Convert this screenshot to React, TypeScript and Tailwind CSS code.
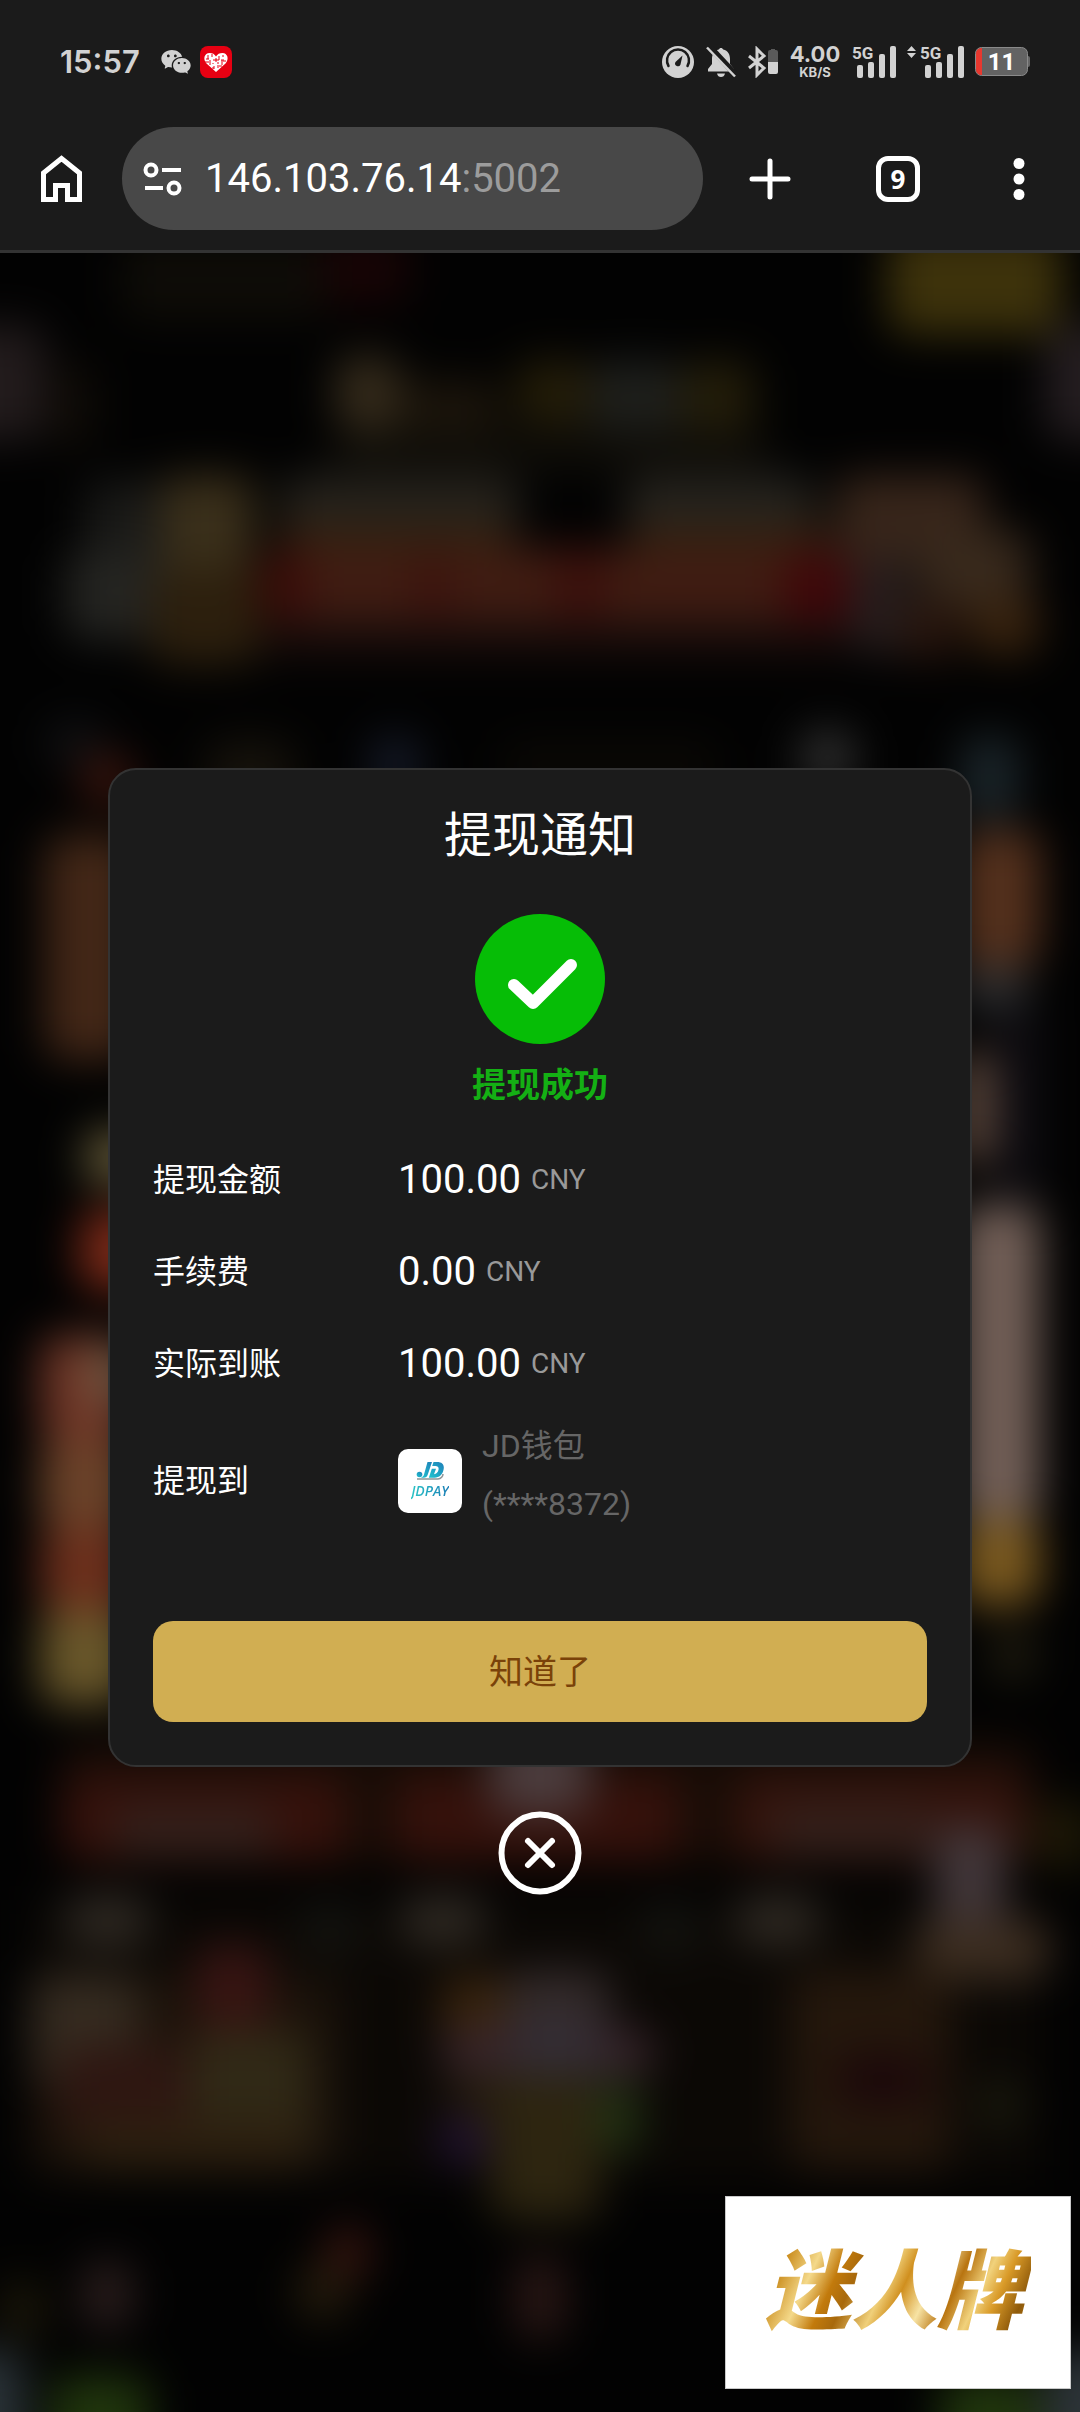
import { RiWechatFill } from "react-icons/ri";

type Patch = [x: number, y: number, w: number, h: number, color: string];

// lobby page behind the dialog, only seen as dim patches of colour
const LOBBY_PATCHES: Patch[] = [
  // top bar
  [120, 240, 210, 80, "#0e0c07"],
  [320, 230, 90, 75, "#170405"],
  [888, 230, 174, 104, "#3d320b"],
  [-60, 325, 105, 115, "#221b1c"],
  [50, 360, 45, 90, "#100c07"],
  [1045, 325, 100, 115, "#241d20"],
  // slogan
  [335, 355, 65, 75, "#352b1b"],
  [400, 380, 100, 60, "#1c150b"],
  [515, 360, 75, 65, "#241d08"],
  [590, 360, 90, 75, "#1e1f1c"],
  [680, 360, 75, 75, "#231d09"],
  [330, 430, 440, 40, "#0f0d08"],
  // banner
  [85, 480, 80, 90, "#191917"],
  [65, 550, 100, 90, "#242421"],
  [160, 475, 95, 100, "#3a2f1a"],
  [150, 570, 110, 95, "#2c1f0d"],
  [280, 475, 240, 60, "#25221c"],
  [625, 475, 190, 60, "#25231e"],
  [280, 525, 235, 30, "#35220f"],
  [630, 525, 200, 30, "#35220f"],
  [265, 548, 590, 75, "#401c12"],
  [260, 550, 45, 70, "#3a0a08"],
  [415, 550, 35, 70, "#3c120d"],
  [555, 550, 50, 70, "#3c0f0b"],
  [785, 550, 65, 75, "#400609"],
  [260, 620, 590, 35, "#1a0d0b"],
  [835, 475, 150, 90, "#37251a"],
  [850, 560, 60, 95, "#261d1d"],
  [920, 530, 110, 80, "#38291c"],
  [970, 600, 70, 55, "#39230e"],
  [900, 600, 60, 60, "#28150d"],
  // category icons
  [45, 720, 60, 45, "#101113"],
  [80, 755, 55, 50, "#3a140c"],
  [205, 740, 90, 65, "#16120b"],
  [370, 735, 50, 60, "#151a28"],
  [500, 740, 220, 50, "#0a0805"],
  [800, 730, 55, 55, "#2f2f2f"],
  [960, 735, 60, 85, "#1a2429"],
  // left column
  [45, 835, 90, 225, "#432717"],
  [85, 1130, 60, 55, "#655a38"],
  [80, 1210, 70, 80, "#7d2a18"],
  [40, 1335, 90, 105, "#6f3526"],
  [85, 1345, 50, 60, "#6e5540"],
  [40, 1440, 90, 90, "#6b4229"],
  [40, 1530, 90, 80, "#6c2f1c"],
  [40, 1610, 90, 95, "#69572a"],
  // right column
  [960, 830, 80, 135, "#55311d"],
  [960, 965, 70, 45, "#2d2e30"],
  [960, 1050, 30, 115, "#74594a"],
  [995, 1010, 45, 190, "#100e13"],
  [960, 1205, 80, 315, "#725f57"],
  [960, 1520, 80, 85, "#7a591f"],
  [990, 1630, 45, 50, "#221e10"],
  // game rows
  [60, 1740, 975, 125, "#180c06"],
  [62, 1775, 285, 85, "#35110b"],
  [110, 1805, 165, 50, "#33201b"],
  [395, 1775, 285, 85, "#35110b"],
  [735, 1775, 290, 85, "#34130c"],
  [770, 1805, 165, 50, "#33201b"],
  [490, 1730, 100, 85, "#4b3c3d"],
  [65, 1895, 85, 50, "#302a23"],
  [400, 1895, 85, 50, "#302a23"],
  [735, 1895, 85, 50, "#302a23"],
  [300, 1900, 60, 55, "#13130f"],
  [640, 1900, 60, 55, "#13130f"],
  [1035, 1800, 60, 70, "#1d1806"],
  [935, 1825, 70, 105, "#42373a"],
  [915, 1920, 135, 60, "#3c2d20"],
  // game covers
  [30, 1975, 310, 195, "#1b120a"],
  [30, 1975, 110, 110, "#352b20"],
  [195, 1945, 75, 85, "#371412"],
  [60, 2045, 140, 85, "#2e1611"],
  [190, 2030, 120, 135, "#302916"],
  [80, 2120, 220, 50, "#2c1f0f"],
  [440, 1975, 70, 65, "#38230d"],
  [505, 1970, 105, 90, "#332a2a"],
  [440, 2030, 215, 45, "#37242b"],
  [510, 2020, 90, 65, "#342d35"],
  [445, 2075, 150, 50, "#201809"],
  [490, 2080, 110, 140, "#2d2510"],
  [598, 2080, 42, 75, "#213213"],
  [440, 2115, 45, 50, "#211136"],
  [790, 1970, 160, 200, "#24170c"],
  [835, 2055, 95, 50, "#1b070a"],
  [980, 2080, 40, 50, "#1c1c0e"],
  // footer tabs
  [82, 2260, 50, 70, "#2b1e1d"],
  [325, 2225, 45, 55, "#37140f"],
  [297, 2265, 50, 55, "#251c0c"],
  [515, 2255, 50, 85, "#2a1715"],
  [0, 2280, 45, 60, "#1c1809"],
  [-60, 2350, 85, 130, "#2a3338"],
  [50, 2375, 100, 110, "#20350d"],
  [940, 2375, 100, 110, "#20350d"],
  [1045, 2350, 100, 130, "#2c3338"],
];

const AMOUNTS = [
  { label: "提现金额", value: "100.00" },
  { label: "手续费", value: "0.00" },
  { label: "实际到账", value: "100.00" },
];

const LobbyBackdrop = () => (
  <svg
    className="absolute inset-0 w-full h-full"
    viewBox="0 253 1080 2159"
    preserveAspectRatio="xMidYMin slice"
    aria-hidden="true"
  >
    <defs>
      <filter id="lobby-blur" x="-10%" y="-10%" width="120%" height="120%" colorInterpolationFilters="sRGB">
        <feGaussianBlur stdDeviation="22" />
      </filter>
    </defs>
    <g filter="url(#lobby-blur)">
      <rect x="-100" y="100" width="1280" height="2500" fill="#020202" />
      <rect x="30" y="1900" width="1010" height="280" fill="#0b0805" />
      {LOBBY_PATCHES.map(([x, y, w, h, color]) => (
        <rect key={`${x}-${y}-${w}`} x={x} y={y} width={w} height={h} rx="20" fill={color} />
      ))}
    </g>
  </svg>
);

const SignalBars = () => (
  <div className="relative w-11 h-8">
    <span className="absolute top-0 left-0 text-[17px] leading-[14px] font-bold font-['Roboto',sans-serif]">5G</span>
    <svg className="w-11 h-8" viewBox="0 0 44 32" fill="currentColor" aria-hidden="true">
      <rect x="5" y="19" width="6" height="13" rx="2" />
      <rect x="16" y="16" width="6" height="16" rx="2" />
      <rect x="27" y="8" width="6" height="24" rx="2" />
      <rect x="38" y="0" width="6" height="32" rx="2" />
    </svg>
  </div>
);

const StatusBar = () => (
  <div className="flex items-center justify-between h-[127px] pb-1 pl-[60px] pr-[50px] text-[#d2d2d2]">
    <div className="flex items-center">
      <time className="text-[31px] leading-8 font-semibold font-['Inter',sans-serif]">15:57</time>
      <RiWechatFill className="ml-5 w-8 h-8" />
      <svg className="ml-2 w-8 h-8" viewBox="0 0 32 32" aria-hidden="true">
        <rect width="32" height="32" rx="8" fill="#e60012" />
        <path
          d="M16 26 6.500 17.500C2.500 13 4.500 7 9.500 7c3 0 5 1 6.500 3.500C17.500 8 19.500 7 22.500 7c5 0 7 6 3 10.500Z"
          fill="#fff"
        />
        <path
          d="M8 9v4m4-5v3m-6 2h3m1 1v5m4 1v3m4-4v3m4-8v5m-3-9v4m5 0h-3m2-5v2M5 16h4m3 6h2m5-2h3m1-5h3M16 12v4m-3-2h6m-1 2v2m-5-1v1"
          stroke="#e60012"
          strokeWidth="1"
        />
      </svg>
    </div>
    <div className="flex items-center gap-[11px]">
      <svg className="w-8 h-8" viewBox="0 0 32 32" aria-hidden="true">
        <circle cx="16" cy="16" r="16" fill="currentColor" />
        <path d="M6.500 20a11 11 0 1 1 19 0" fill="none" stroke="#1b1b1b" strokeWidth="2.500" strokeLinecap="round" />
        <path d="m20.500 9.500-2 9a2.800 2.800 0 1 1-5-2.500Z" fill="#1b1b1b" />
      </svg>
      <svg className="w-8 h-8" viewBox="0 0 32 32" aria-hidden="true">
        <path
          d="M16 2c1 0 1.800.6 2.200 1.500C23 4.500 25 8.500 25 13v5l4 5v2.500H3V23l4-5v-5c0-4.500 2-8.500 6.800-9.500C14.200 2.600 15 2 16 2ZM12 27.500h8c-.5 2.500-2 3.500-4 3.500s-3.500-1-4-3.500Z"
          fill="currentColor"
        />
        <path d="M4 0 31 29" stroke="#1b1b1b" strokeWidth="6" />
        <path d="M2 1.500 30 30.500" stroke="currentColor" strokeWidth="2.500" />
      </svg>
      <svg className="w-[30px] h-8" viewBox="0 0 30 32" fill="none" aria-hidden="true">
        <path d="m1 10 15 12-7 7V3l7 7L1 22" stroke="currentColor" strokeWidth="3" />
        <path d="M20 6a2 2 0 0 1 2-2h1V3h4v1h1a2 2 0 0 1 2 2v10H20Z" fill="#5a5a5a" />
        <path d="M20 16h10v10a2 2 0 0 1-2 2h-6a2 2 0 0 1-2-2Z" fill="currentColor" />
      </svg>
      <div className="flex flex-col items-center w-[52px] font-['Inter',sans-serif]">
        <span className="text-[22px] leading-5 font-bold">4.00</span>
        <span className="text-[13px] leading-4 font-bold">KB/S</span>
      </div>
      <SignalBars />
      <div className="flex items-start gap-1">
        <svg className="w-[9px] h-3" viewBox="0 0 9 12" fill="currentColor" aria-hidden="true">
          <path d="M4.500 0 9 5H0ZM4.500 12 0 7h9Z" />
        </svg>
        <SignalBars />
      </div>
      <div className="relative w-[55px] h-[29px]">
        <svg className="w-[55px] h-[29px]" viewBox="0 0 55 29" aria-hidden="true">
          <path d="M51 9h2a2 2 0 0 1 2 2v7a2 2 0 0 1-2 2h-2Z" fill="#666" />
          <rect x="0.500" y="0.500" width="52" height="28" rx="6" fill="#636363" stroke="#8a8a8a" />
          <path d="M7 1h-.5A5.500 5.500 0 0 0 1 6.500v16A5.500 5.500 0 0 0 6.500 28H7Z" fill="#e8382f" />
        </svg>
        <span className="absolute inset-0 pr-0.5 text-center text-2xl leading-[30px] font-bold text-white font-['Roboto',sans-serif]">
          11
        </span>
      </div>
    </div>
  </div>
);

const BrowserToolbar = () => (
  <div className="flex items-center pl-[41px] pr-[47px] pb-5 text-white">
    <button aria-label="Home">
      <svg className="w-[41px] h-12" viewBox="0 0 41 48" aria-hidden="true">
        <path
          d="M2.500 18 20.500 3.500 38.500 18v26.500H26.500V30.500h-12v14H2.500Z"
          fill="none"
          stroke="currentColor"
          strokeWidth="5"
        />
      </svg>
    </button>
    <button className="flex flex-1 items-center ml-10 mr-[46px] h-[103px] pl-[21px] rounded-full bg-[#484848]">
      <svg className="w-10 h-[34px]" viewBox="0 0 40 34" fill="none" stroke="currentColor" strokeWidth="4" aria-hidden="true">
        <circle cx="8" cy="8" r="5.500" />
        <path d="M19 8h19M2 26h18" />
        <circle cx="31" cy="26" r="5.500" />
      </svg>
      <span className="ml-[22px] text-[40px] leading-[48px] text-[#9c9c9c] font-['Roboto',sans-serif]">
        <span className="text-white">146.103.76.14</span>:5002
      </span>
    </button>
    <div className="flex items-center gap-[85px]">
      <button aria-label="New tab">
        <svg className="w-[42px] h-[42px]" viewBox="0 0 42 42" aria-hidden="true">
          <path d="M21 3v36M3 21h36" stroke="currentColor" strokeWidth="5" strokeLinecap="round" />
        </svg>
      </button>
      <button
        aria-label="Tabs"
        className="flex items-center justify-center w-11 h-[46px] border-5 border-white rounded-xl text-[26px] leading-8 font-bold font-['Open_Sans',sans-serif]"
      >
        9
      </button>
      <button aria-label="Menu">
        <svg className="w-7 h-[42px]" viewBox="0 0 28 42" fill="currentColor" aria-hidden="true">
          <circle cx="14" cy="5.500" r="5.500" />
          <circle cx="14" cy="21" r="5.500" />
          <circle cx="14" cy="36.500" r="5.500" />
        </svg>
      </button>
    </div>
  </div>
);

const JdPayLogo = () => (
  <div className="flex flex-col items-center justify-center gap-0.5 w-16 h-16 rounded-[10px] bg-white">
    <svg className="w-7 h-[18px]" viewBox="0 0 28 18" aria-hidden="true">
      <defs>
        <linearGradient id="jd" x1="0" y1="1" x2="1" y2="0">
          <stop offset="0" stopColor="#1fc4cf" />
          <stop offset="1" stopColor="#1f7fb8" />
        </linearGradient>
      </defs>
      <path d="M1 17h21c3 0 5-3 5-5" fill="none" stroke="#8f9597" strokeWidth="1.500" />
      <g fill="url(#jd)">
        <circle cx="3.500" cy="12.500" r="2.800" />
        <path d="M11.500 0H16l-4.200 12.500c-.7 2.200-2 3.200-4.300 3.200H4.500c2-.6 3-1.500 3.500-3.200Z" />
        <path d="M17.500 0H21c5.500 0 7.500 3 6.600 7.500-1 5-4.200 8.200-9.200 8.200h-5.600l3-9H20l-2 5.500c2.500-.2 4-2 4.500-4.400.5-2.600-.6-3.800-3-3.800h-3.300Z" />
      </g>
    </svg>
    <span className="bg-linear-to-r from-[#2cc5c6] to-[#1d7fb6] bg-clip-text text-sm leading-[18px] font-semibold italic text-transparent font-['Open_Sans',sans-serif]">
      JDPAY
    </span>
  </div>
);

const WithdrawDialog = () => (
  <div
    role="dialog"
    aria-labelledby="withdraw-title"
    className="w-full px-[43px] pt-[34px] pb-[43px] border-2 border-[#333] rounded-[28px] bg-[#1b1b1b] text-white"
  >
    <h1 id="withdraw-title" className="text-center text-5xl leading-16">
      提现通知
    </h1>
    <div className="flex flex-col items-center mt-[46px]">
      <svg className="w-[130px] h-[130px]" viewBox="0 0 130 130" aria-hidden="true">
        <circle cx="65" cy="65" r="65" fill="#06bd06" />
        <path
          d="m39 71 19 18 38-38"
          fill="none"
          stroke="#fff"
          strokeWidth="12"
          strokeLinecap="round"
          strokeLinejoin="round"
        />
      </svg>
      <p className="mt-[17px] text-[34px] leading-12 font-bold text-[#14b014]">提现成功</p>
    </div>

    <dl className="mt-[25px] text-[32px]">
      {AMOUNTS.map(({ label, value }) => (
        <div key={label} className="flex items-center h-[92px]">
          <dt className="w-[245px]">{label}</dt>
          <dd className="flex items-center gap-2.5">
            <span className="text-[40px] leading-12">{value}</span>
            <span className="text-[28px] leading-12 text-[#999]">CNY</span>
          </dd>
        </div>
      ))}
      <div className="flex items-center mt-[7px]">
        <dt className="w-[245px]">提现到</dt>
        <dd className="flex items-center gap-5 text-[#666]">
          <JdPayLogo />
          <p className="pb-3 leading-[58px]">
            JD钱包
            <br />
            (****8372)
          </p>
        </dd>
      </div>
    </dl>

    <button className="mt-[76px] w-full h-[101px] rounded-[20px] bg-[#d1ae52] text-[34px] leading-12 text-[#7a4209]">
      知道了
    </button>
  </div>
);

const BrandPlate = () => (
  <div className="absolute right-[9px] bottom-[23px] flex items-center justify-center w-[346px] h-[193px] pr-2 border border-[#c9c9c9] bg-white">
    <span className="bg-[linear-gradient(115deg,#b9780f_0%,#c98a1a_12%,#f4d98a_22%,#c27a0c_30%,#a8690c_36%,#f0d07a_46%,#d08f1e_52%,#f7e3a4_60%,#b87410_68%,#f1d27c_76%,#d99a28_82%,#8f5a0a_90%,#c98a1a_100%)] bg-clip-text px-2 text-[86px] leading-[120px] font-black italic text-transparent">
      迷人牌
    </span>
  </div>
);

const App = () => {
  return (
    <div className="flex flex-col min-h-screen bg-black font-['Roboto','Noto_Sans_CJK_SC',sans-serif]">
      <header className="border-b-3 border-[#333] bg-[#1b1b1b]">
        <StatusBar />
        <BrowserToolbar />
      </header>
      <main className="relative flex flex-1 items-center justify-center overflow-hidden">
        <LobbyBackdrop />
        <div className="relative flex flex-col items-center w-4/5 pb-0.5">
          <WithdrawDialog />
          <button aria-label="关闭" className="mt-11 text-white">
            <svg className="w-[84px] h-[84px]" viewBox="0 0 84 84" fill="none" stroke="currentColor" aria-hidden="true">
              <circle cx="42" cy="42" r="38.500" strokeWidth="6" />
              <path d="m30 30 24 24M54 30 30 54" strokeWidth="6" strokeLinecap="round" />
            </svg>
          </button>
        </div>
        <BrandPlate />
      </main>
    </div>
  );
};

export default App;
